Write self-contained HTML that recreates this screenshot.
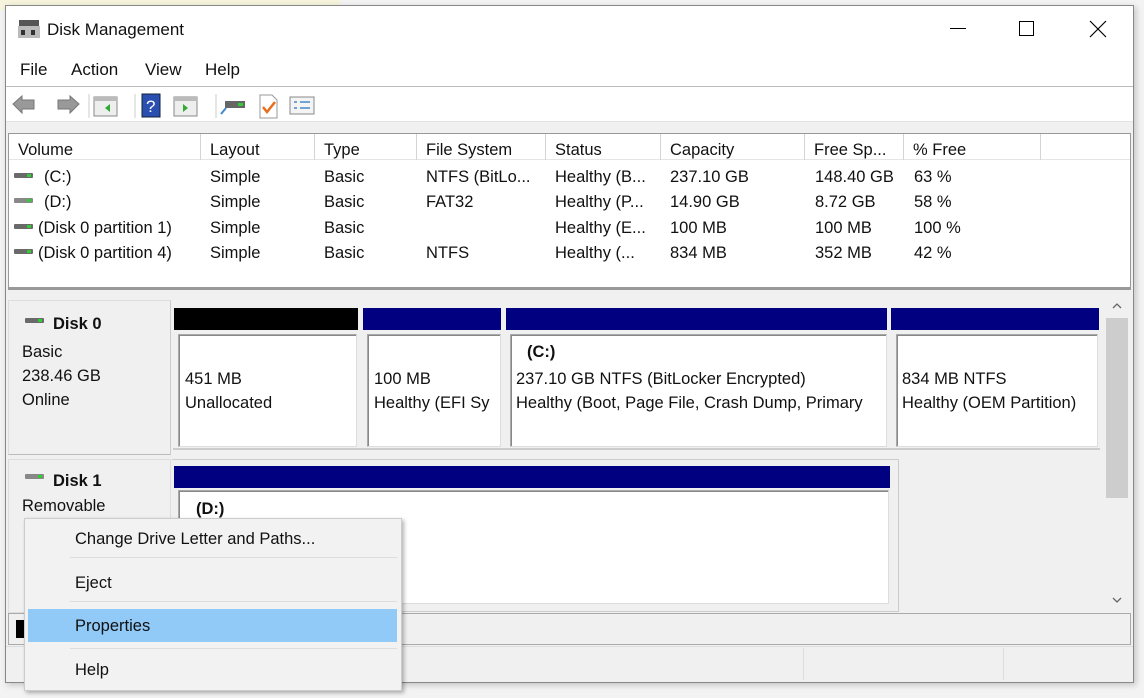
<!DOCTYPE html>
<html><head><meta charset="utf-8"><style>
*{box-sizing:border-box;margin:0;padding:0}
body{width:1144px;height:698px;background:#f3f3f3;font-family:"Liberation Sans",sans-serif;font-size:16.5px;color:#111;position:relative;overflow:hidden}
.a{position:absolute}
.t{position:absolute;white-space:nowrap}
.hdr{position:absolute;top:0;height:26px;border-right:1px solid #d4d4d4;padding:6px 0 0 9px;white-space:nowrap;line-height:20px}
.bar{position:absolute;height:22px;background:#000080}
.box{position:absolute;background:#fff;border:1px solid #a8a8a8;border-right-color:#ddd;border-bottom-color:#ddd;box-shadow:inset 1px 1px 0 #888;}
.pc{position:absolute;background:#f0f0f0;border:1px solid #ddd}
.ic{position:absolute;width:19px;height:5px;background:#6a6a6a;border-radius:1px}
.ic::after{content:"";position:absolute;right:2px;top:1px;width:4px;height:3px;background:#3c3}
</style></head><body>
<div class="a" style="left:0;top:0;width:340px;height:10px;background:#f6f4dc"></div>
<div class="a" style="left:5px;top:5px;width:1129px;height:678px;background:#f0f0f0;border:1px solid #888;box-shadow:2px 2px 6px rgba(0,0,0,.2)"></div>
<div class="a" style="left:6px;top:6px;width:1127px;height:81px;background:#fff"></div>
<div class="a" style="left:6px;top:86px;width:1127px;height:1px;background:#bbb"></div>
<div class="a" style="left:6px;top:87px;width:1127px;height:34px;background:#fff"></div>
<div class="a" style="left:6px;top:121px;width:1127px;height:1px;background:#e3e3e3"></div>
<svg class="a" style="left:17px;top:18px" width="24" height="22"><rect x="2" y="2" width="20" height="6" fill="#555"/><rect x="1" y="8" width="22" height="12" fill="#bbb"/><rect x="4" y="12" width="4" height="5" fill="#333"/><rect x="14" y="12" width="4" height="5" fill="#333"/></svg>
<div class="t" style="left:47px;top:20px;font-size:17px">Disk Management</div>
<div class="a" style="left:950px;top:28px;width:16px;height:1px;background:#000"></div>
<div class="a" style="left:1019px;top:21px;width:15px;height:15px;border:1px solid #000"></div>
<svg class="a" style="left:1089px;top:20px" width="18" height="18"><path d="M1 1L17 17M17 1L1 17" stroke="#000" stroke-width="1.2"/></svg>
<div class="t" style="left:20px;top:60px;font-size:17px">File</div>
<div class="t" style="left:71px;top:60px;font-size:17px">Action</div>
<div class="t" style="left:145px;top:60px;font-size:17px">View</div>
<div class="t" style="left:205px;top:60px;font-size:17px">Help</div>
<svg class="a" style="left:10px;top:92px" width="320" height="28">
<path d="M3 12L12 4V8H24V17H12V21Z" fill="#999" stroke="#777"/>
<path d="M69 12L60 4V8H48V17H60V21Z" fill="#999" stroke="#777"/>
<line x1="79" y1="2" x2="79" y2="26" stroke="#ccc"/>
<rect x="84" y="5" width="23" height="19" fill="#eee" stroke="#888"/><rect x="84" y="5" width="23" height="4" fill="#bbb"/><path d="M100 12L95 16L100 20Z" fill="#3a3"/>
<line x1="125" y1="2" x2="125" y2="26" stroke="#ccc"/>
<rect x="132" y="2" width="18" height="23" fill="#2a4fb0" stroke="#123"/><text x="136" y="20" fill="#fff" font-size="17" font-family="Liberation Sans">?</text>
<rect x="164" y="5" width="23" height="19" fill="#eee" stroke="#888"/><rect x="164" y="5" width="23" height="4" fill="#bbb"/><path d="M173 12L178 16L173 20Z" fill="#3a3"/>
<line x1="206" y1="2" x2="206" y2="26" stroke="#ccc"/>
<rect x="215" y="9" width="20" height="7" fill="#666"/><rect x="228" y="11" width="5" height="3" fill="#3c3"/><path d="M216 16L211 22" stroke="#48c" stroke-width="2"/>
<path d="M250 3H262L267 8V26H250Z" fill="#fff" stroke="#999"/><path d="M253 15L257 20L265 10" stroke="#e76f1a" stroke-width="2.5" fill="none"/>
<rect x="280" y="5" width="24" height="17" fill="#f4f4f4" stroke="#888"/><path d="M284 10h3M290 10h10M284 16h3M290 16h10" stroke="#48c" stroke-width="1.5"/>
</svg>
<div class="a" style="left:8px;top:133px;width:1123px;height:157px;background:#fff;border:1px solid #999;border-bottom:3px solid #999"></div>
<div class="a" style="left:9px;top:134px;width:1121px;height:26px;border-bottom:1px solid #e5e5e5">
<div class="hdr" style="left:0;width:192px">Volume</div>
<div class="hdr" style="left:192px;width:114px">Layout</div>
<div class="hdr" style="left:306px;width:102px">Type</div>
<div class="hdr" style="left:408px;width:129px">File System</div>
<div class="hdr" style="left:537px;width:115px">Status</div>
<div class="hdr" style="left:652px;width:144px">Capacity</div>
<div class="hdr" style="left:796px;width:99px">Free Sp...</div>
<div class="hdr" style="left:895px;width:137px">% Free</div>
</div>
<div class="ic" style="left:14px;top:173px"></div><div class="t" style="left:44px;top:168px">(C:)</div>
<div class="ic" style="left:14px;top:198px;background:#888"></div><div class="t" style="left:44px;top:193px">(D:)</div>
<div class="ic" style="left:14px;top:224px"></div><div class="t" style="left:38px;top:219px">(Disk 0 partition 1)</div>
<div class="ic" style="left:14px;top:249px"></div><div class="t" style="left:38px;top:244px">(Disk 0 partition 4)</div>
<div class="t" style="left:210px;top:165px;line-height:25.4px">Simple<br>Simple<br>Simple<br>Simple</div>
<div class="t" style="left:324px;top:165px;line-height:25.4px">Basic<br>Basic<br>Basic<br>Basic</div>
<div class="t" style="left:426px;top:165px;line-height:25.4px">NTFS (BitLo...<br>FAT32<br>&nbsp;<br>NTFS</div>
<div class="t" style="left:555px;top:165px;line-height:25.4px">Healthy (B...<br>Healthy (P...<br>Healthy (E...<br>Healthy (...</div>
<div class="t" style="left:670px;top:165px;line-height:25.4px">237.10 GB<br>14.90 GB<br>100 MB<br>834 MB</div>
<div class="t" style="left:815px;top:165px;line-height:25.4px">148.40 GB<br>8.72 GB<br>100 MB<br>352 MB</div>
<div class="t" style="left:914px;top:165px;line-height:25.4px">63 %<br>58 %<br>100 %<br>42 %</div>
<div class="a" style="left:8px;top:296px;width:1096px;height:317px;background:#f0f0f0"></div>
<div class="pc" style="left:8px;top:300px;width:163px;height:155px;border-right-color:#ccc;border-bottom-color:#bbb"></div>
<div class="ic" style="left:25px;top:318px"></div>
<div class="t" style="left:53px;top:315px;font-weight:bold">Disk 0</div>
<div class="t" style="left:22px;top:340px;line-height:24px">Basic<br>238.46 GB<br>Online</div>
<div class="bar" style="left:174px;top:308px;width:184px;background:#000"></div>
<div class="bar" style="left:363px;top:308px;width:138px"></div>
<div class="bar" style="left:506px;top:308px;width:381px"></div>
<div class="bar" style="left:891px;top:308px;width:208px"></div>
<div class="a" style="left:173px;top:330px;width:927px;height:120px;background:#f0f0f0;border-bottom:2px solid #ccc"></div>
<div class="box" style="left:178px;top:334px;width:179px;height:113px"></div>
<div class="box" style="left:367px;top:334px;width:134px;height:113px"></div>
<div class="box" style="left:510px;top:334px;width:377px;height:113px"></div>
<div class="box" style="left:896px;top:334px;width:202px;height:113px"></div>
<div class="t" style="left:185px;top:367px;line-height:24px">451 MB<br>Unallocated</div>
<div class="t" style="left:374px;top:367px;line-height:24px;width:122px;overflow:hidden">100 MB<br>Healthy (EFI Sy</div>
<div class="t" style="left:527px;top:343px;font-weight:bold">(C:)</div>
<div class="t" style="left:516px;top:367px;line-height:24px;width:366px;overflow:hidden">237.10 GB NTFS (BitLocker Encrypted)<br>Healthy (Boot, Page File, Crash Dump, Primary</div>
<div class="t" style="left:902px;top:367px;line-height:24px">834 MB NTFS<br>Healthy (OEM Partition)</div>
<div class="pc" style="left:8px;top:459px;width:163px;height:154px"></div>
<div class="ic" style="left:25px;top:474px;background:#888"></div>
<div class="t" style="left:53px;top:472px;font-weight:bold">Disk 1</div>
<div class="t" style="left:22px;top:497px">Removable</div>
<div class="a" style="left:172px;top:459px;width:727px;height:153px;border:1px solid #ccc;border-left:none"></div>
<div class="bar" style="left:174px;top:466px;width:716px"></div>
<div class="box" style="left:178px;top:490px;width:711px;height:114px"></div>
<div class="t" style="left:196px;top:500px;font-weight:bold">(D:)</div>
<div class="a" style="left:1104px;top:296px;width:26px;height:317px;background:#f0f0f0"></div>
<div class="a" style="left:1106px;top:318px;width:22px;height:180px;background:#cdcdcd"></div>
<svg class="a" style="left:1111px;top:301px" width="12" height="10"><path d="M2 7L6 3L10 7" stroke="#666" fill="none" stroke-width="1.3"/></svg>
<svg class="a" style="left:1111px;top:595px" width="12" height="10"><path d="M2 3L6 7L10 3" stroke="#666" fill="none" stroke-width="1.3"/></svg>
<div class="a" style="left:8px;top:613px;width:1123px;height:32px;background:#f0f0f0;border:1px solid #aaa"></div>
<div class="a" style="left:16px;top:620px;width:10px;height:18px;background:#000"></div>
<div class="a" style="left:6px;top:646px;width:1127px;height:36px;background:#f0f0f0;border-top:1px solid #ddd"></div>
<div class="a" style="left:803px;top:648px;width:1px;height:32px;background:#ddd"></div>
<div class="a" style="left:1003px;top:648px;width:1px;height:32px;background:#ddd"></div>
<div class="a" style="left:24px;top:518px;width:378px;height:173px;background:#f2f2f2;border:1px solid #ccc;box-shadow:2px 2px 4px rgba(0,0,0,.3)"></div>
<div class="t" style="left:75px;top:530px">Change Drive Letter and Paths...</div>
<div class="a" style="left:70px;top:557px;width:327px;height:1px;background:#ddd"></div>
<div class="t" style="left:75px;top:574px">Eject</div>
<div class="a" style="left:70px;top:601px;width:327px;height:1px;background:#ddd"></div>
<div class="a" style="left:28px;top:609px;width:369px;height:33px;background:#91c9f7"></div>
<div class="t" style="left:75px;top:617px">Properties</div>
<div class="a" style="left:70px;top:648px;width:327px;height:1px;background:#ddd"></div>
<div class="t" style="left:75px;top:661px">Help</div>
</body></html>
